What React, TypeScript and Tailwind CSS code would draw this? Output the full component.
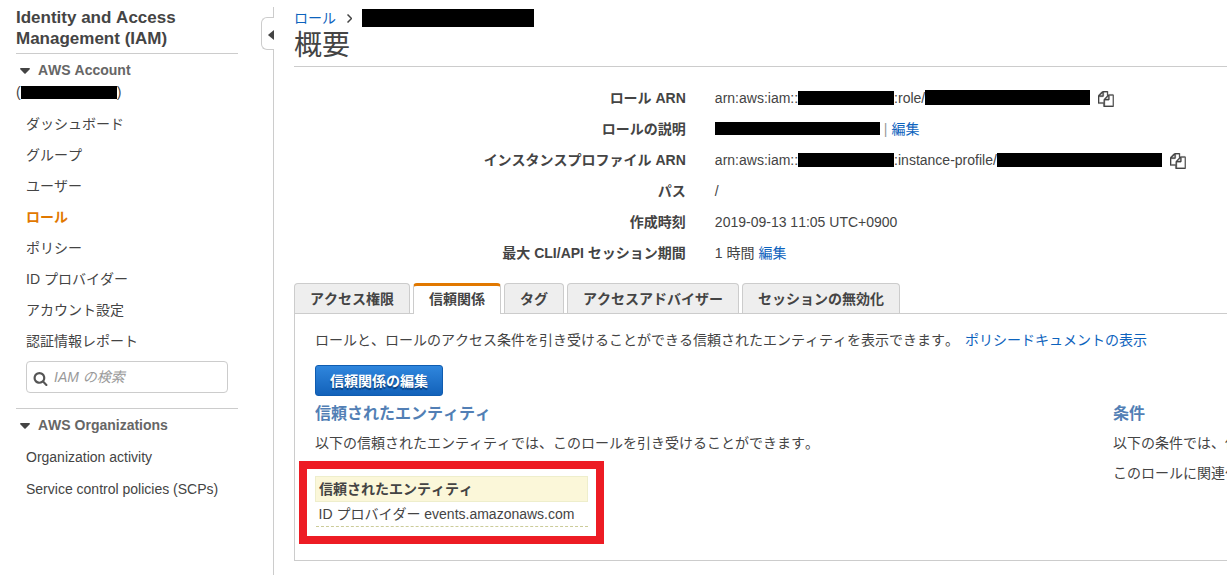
import React from "react";

const navItems = [
  "ダッシュボード",
  "グループ",
  "ユーザー",
  "ロール",
  "ポリシー",
  "ID プロバイダー",
  "アカウント設定",
  "認証情報レポート",
];

const tabs = ["アクセス権限", "信頼関係", "タグ", "アクセスアドバイザー", "セッションの無効化"];

function Redacted({ className }: { className: string }) {
  return <span className={`block shrink-0 bg-black ${className}`} />;
}

function Caret() {
  return (
    <svg className="mt-[2px] h-[6px] w-[10px] shrink-0 fill-[#444]" viewBox="0 0 10 6">
      <path d="M0.5 0h9L10 1 5.6 5.6a.9.9 0 0 1-1.2 0L0 1z" />
    </svg>
  );
}

function CopyButton({ label }: { label: string }) {
  return (
    <button type="button" aria-label={label} className="ml-2 shrink-0">
      <svg className="mt-[2px] h-4 w-4 fill-[#444] stroke-[#444]" strokeWidth="40" viewBox="0 0 1792 1792">
        <path d="M1664 384q40 0 68 28t28 68v1216q0 40-28 68t-68 28h-960q-40 0-68-28t-28-68v-288h-544q-40 0-68-28t-28-68v-672q0-40 20-88t48-76l408-408q28-28 76-48t88-20h416q40 0 68 28t28 68v328q68-40 128-40h416zM1152 597l-299 299h299v-299zM512 213l-299 299h299v-299zM708 860l316-316v-416h-384v416q0 40-28 68t-68 28h-416v640h512v-256q0-40 20-88t48-76zM1664 1664v-1152h-384v416q0 40-28 68t-68 28h-416v640h896z" />
      </svg>
    </button>
  );
}

function Row({ label, children }: { label: string; children: React.ReactNode }) {
  return (
    <div className="grid h-[31px] grid-cols-[42%_1fr] items-center gap-[29px]">
      <dt className="text-right font-bold">{label}</dt>
      <dd className="flex min-w-0 items-center whitespace-nowrap">{children}</dd>
    </div>
  );
}

function Sidebar() {
  return (
    <aside className="relative mt-[7px] w-[274px] shrink-0 border-r border-[#ccc] pr-[35px] pl-4">
      <h1 className="border-b border-[#ccc] pb-1 text-[17px] leading-[21px] font-bold">
        Identity and Access
        <br />
        Management (IAM)
      </h1>
      <h2 className="mt-[5px] flex items-center gap-2 pl-1 leading-[22px] font-bold text-[#666]">
        <Caret />
        AWS Account
      </h2>
      <div className="flex items-center leading-[22px]">
        (<Redacted className="h-[13px] w-24" />)
      </div>
      <nav className="mt-[5px] pl-[10px]">
        <ul>
          {navItems.map((item) => (
            <li key={item} className="flex h-[31px] items-center">
              <a href="#" className={item === "ロール" ? "font-bold text-[#e17800]" : ""}>
                {item}
              </a>
            </li>
          ))}
        </ul>
      </nav>
      <label className="mx-[10px] mt-[5px] flex h-8 items-center gap-[6px] rounded border border-[#ccc] px-[6px]">
        <svg className="mt-[3px] h-[15px] w-[15px] shrink-0 fill-[#555]" viewBox="0 0 1792 1792">
          <path d="M1216 832q0-185-131.5-316.5t-316.5-131.5-316.5 131.5-131.5 316.5 131.5 316.5 316.5 131.5 316.5-131.5 131.5-316.5zm512 832q0 52-38 90t-90 38q-54 0-90-38l-343-342q-179 124-399 124-143 0-273.5-55.5t-225-150-150-225-55.5-273.5 55.5-273.5 150-225 225-150 273.5-55.5 273.5 55.5 225 150 150 225 55.5 273.5q0 220-124 399l343 343q37 37 37 90z" />
        </svg>
        <input
          type="search"
          aria-label="IAM の検索"
          placeholder="IAM の検索"
          className="w-full min-w-0 outline-none placeholder:text-[#999] placeholder:italic"
        />
      </label>
      <h2 className="mt-[15px] flex items-center gap-2 border-t border-[#ccc] pt-[5px] pl-1 leading-[22px] font-bold text-[#666]">
        <Caret />
        AWS Organizations
      </h2>
      <ul className="mt-[5px] pl-[10px] leading-8">
        <li>
          <a href="#">Organization activity</a>
        </li>
        <li>
          <a href="#">Service control policies (SCPs)</a>
        </li>
      </ul>
      <button
        type="button"
        aria-label="メニューを閉じる"
        className="absolute top-[10px] -right-px flex h-[33px] w-[13px] items-center justify-end rounded-l-md border border-r-0 border-[#ccc] bg-white"
      >
        <svg className="mt-[2px] h-[10px] w-[6px] fill-[#444]" viewBox="0 0 6 10">
          <path d="M6 0v10L.5 5.6a.8.8 0 0 1 0-1.2z" />
        </svg>
      </button>
    </aside>
  );
}

export default function App() {
  return (
    <div className="flex min-h-screen overflow-hidden bg-white font-['Liberation_Sans','Noto_Sans_CJK_JP',sans-serif] text-[14px] leading-[20px] text-[#444] [font-kerning:none]">
      <Sidebar />
      <main className="min-w-0 flex-1 pt-2 pl-5">
        <nav className="flex items-center">
          <a href="#" className="text-[#0d63bd]">
            ロール
          </a>
          <svg className="mr-[10px] ml-[11px] h-[9px] w-[5px] fill-none stroke-[#444]" strokeWidth="1.5" viewBox="0 0 5 9">
            <path d="M.5.5l4 4-4 4" />
          </svg>
          <Redacted className="h-[18px] w-[172px]" />
        </nav>
        <h1 className="border-b border-[#ccc] pb-[3px] text-[28px] leading-[35px]">概要</h1>

        <dl className="mt-[15px]">
          <Row label="ロール ARN">
            arn:aws:iam::
            <Redacted className="h-[14px] w-24" />
            :role/
            <Redacted className="h-[15px] w-[165px]" />
            <CopyButton label="ロール ARN をコピー" />
          </Row>
          <Row label="ロールの説明">
            <Redacted className="h-[13px] w-[165px]" />
            <span className="mx-1 text-[#999]">|</span>
            <a href="#" className="text-[#0d63bd]">
              編集
            </a>
          </Row>
          <Row label="インスタンスプロファイル ARN">
            arn:aws:iam::
            <Redacted className="h-[14px] w-24" />
            :instance-profile/
            <Redacted className="h-[14px] w-[165px]" />
            <CopyButton label="インスタンスプロファイル ARN をコピー" />
          </Row>
          <Row label="パス">/</Row>
          <Row label="作成時刻">2019-09-13 11:05 UTC+0900</Row>
          <Row label="最大 CLI/API セッション期間">
            <span className="mr-1">1 時間</span>
            <a href="#" className="text-[#0d63bd]">
              編集
            </a>
          </Row>
        </dl>

        <div role="tablist" className="mt-[15px] flex gap-[3px]">
          {tabs.map((tab) => {
            const active = tab === "信頼関係";
            return (
              <button
                key={tab}
                type="button"
                role="tab"
                aria-selected={active}
                className={
                  active
                    ? "relative -mb-px h-[31px] rounded-t border border-t-3 border-b-0 border-[#ccc] border-t-[#e17800] bg-white px-[15px] pb-[2px] font-bold"
                    : "h-[30px] rounded-t border border-b-0 border-[#ccc] bg-[#eee] px-[15px] font-bold"
                }
              >
                {tab}
              </button>
            );
          })}
        </div>
        <section className="border border-r-0 border-[#ccc] pt-4 pb-4 pl-5 whitespace-nowrap">
          <p>
            ロールと、ロールのアクセス条件を引き受けることができる信頼されたエンティティを表示できます。
            <a href="#" className="ml-[6px] text-[#0d63bd]">
              ポリシードキュメントの表示
            </a>
          </p>
          <button
            type="button"
            className="mt-[15px] block h-[31px] rounded-[3px] border border-[#0f5cb0] bg-linear-to-b from-[#2f86dd] to-[#1262ba] px-[14px] font-bold text-white text-shadow-[0_2px_1px_#0a3d78]"
          >
            信頼関係の編集
          </button>
          <div className="flex overflow-hidden">
            <div className="w-7/8 shrink-0">
              <h2 className="mt-[6px] text-[16px] leading-6 font-bold text-[#527fb5]">信頼されたエンティティ</h2>
              <p className="mt-[5px] leading-[24px]">以下の信頼されたエンティティでは、このロールを引き受けることができます。</p>
            </div>
            <div className="shrink-0">
              <h2 className="mt-[6px] text-[16px] leading-6 font-bold text-[#527fb5]">条件</h2>
              <p className="mt-[5px] leading-[24px]">以下の条件では、信頼されたエンティティがロールを引き受ける方法を定義します。</p>
              <p className="mt-[6px] leading-[24px]">このロールに関連付けられた条件はありません。</p>
            </div>
          </div>
          <div className="-mt-6 -ml-4 w-[305px] border-8 border-[#ed1c24] px-2 pt-[7px] pb-[9px]">
            <table className="w-full border-collapse text-left">
              <thead>
                <tr>
                  <th className="h-[25px] border border-[#eeeecc] bg-[#fbf7d9] px-[3px] font-bold">信頼されたエンティティ</th>
                </tr>
              </thead>
              <tbody>
                <tr>
                  <td className="h-[25px] border-b border-dashed border-[#cccc99] px-[3px]">ID プロバイダー events.amazonaws.com</td>
                </tr>
              </tbody>
            </table>
          </div>
        </section>
      </main>
    </div>
  );
}
